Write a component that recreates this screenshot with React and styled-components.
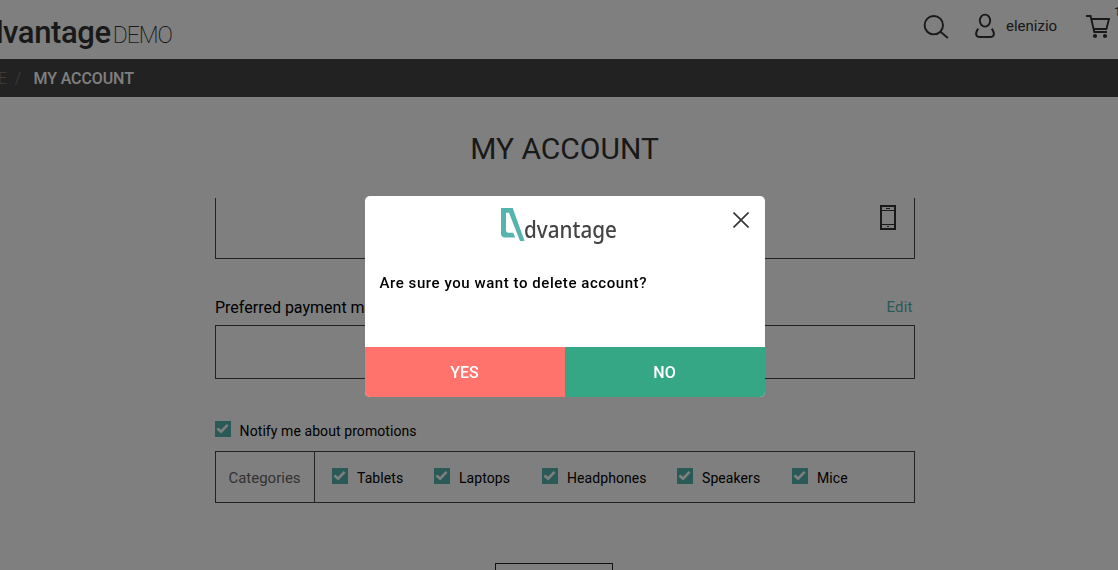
import React from "react";
import styled, { createGlobalStyle } from "styled-components";

const GlobalStyle = createGlobalStyle`
  * { box-sizing: border-box; }
  html, body { margin: 0; height: 570px; overflow: hidden; background: #fff; }
  body { font-family: Roboto, "Liberation Sans", sans-serif; color: #000; }
`;

const Page = styled.div`
  width: 1118px;
  height: 570px;
  overflow: hidden;
  background: #fff;
`;

const Header = styled.header`
  display: flex;
  justify-content: space-between;
  height: 59px;
`;

const Brand = styled.div`
  display: flex;
  align-items: baseline;
  justify-content: flex-end;
  width: 172px;
  padding-top: 14px;
  line-height: 38px;
  white-space: nowrap;
  color: #333;
`;

const BrandName = styled.span`
  font-size: 31px;
  font-weight: 500;
  letter-spacing: -0.4px;
`;

const BrandSuffix = styled.span`
  margin-left: 2px;
  font-size: 23px;
  font-weight: 200;
  letter-spacing: -1px;
`;

const Tools = styled.nav`
  display: flex;
  width: 195px;
  color: #333;
  svg { flex: none; display: block; }
`;

const UserName = styled.span`
  flex: none;
  width: 83px;
  padding-left: 9px;
  font-size: 15px;
  line-height: 52px;
`;

const CartCount = styled.span`
  font-size: 13px;
  line-height: 23px;
`;

const Breadcrumb = styled.div`
  display: flex;
  height: 38px;
  line-height: 39px;
  font-size: 16px;
  white-space: pre;
  background: #444;
  color: #fff;
`;

const Crumb = styled.span`
  display: flex;
  justify-content: flex-end;
  width: ${(p) => p.$width}px;
  color: #808080;
  font-weight: 300;
`;

const CurrentCrumb = styled.span`
  margin-left: 12.5px;
  font-weight: 500;
  letter-spacing: -0.1px;
`;

const Title = styled.h1`
  margin: 0;
  height: 101px;
  padding: 33px 0 0 11px;
  font-size: 30px;
  font-weight: 400;
  line-height: 37px;
  text-align: center;
  color: #333;
`;

const Content = styled.main`
  width: 700px;
  margin-left: 215px;
`;

const Panel = styled.section`
  height: ${(p) => p.$height}px;
  border: 1px solid #444;
  border-top-width: ${(p) => (p.$open ? 0 : 1)}px;
`;

const PhoneSlot = styled.div`
  display: flex;
  justify-content: flex-end;
  padding: 7px 18px 0 0;
`;

const SectionHead = styled.div`
  display: flex;
  justify-content: space-between;
  height: 66px;
  padding: 38px 2.6px 0 0;
  font-size: 16px;
  line-height: 22px;
`;

const EditLink = styled.a`
  font-size: 15px;
  line-height: 20px;
  letter-spacing: 0.1px;
  color: #55b4ae;
`;

const Option = styled.label`
  display: flex;
  align-items: flex-start;
  width: ${(p) => p.$width}px;
  font-size: 14px;
  line-height: 20px;
  letter-spacing: 0.08px;
  white-space: nowrap;
`;

const Tick = styled.span`
  flex: none;
  width: 16px;
  height: 16px;
  margin-right: ${(p) => p.$gap}px;
  background: #55b4ae;
  svg { display: block; }
`;

const Notify = styled.div`
  height: 72px;
  padding-top: 42px;
`;

const Categories = styled.section`
  display: flex;
  height: 52px;
  border: 1px solid #444;
`;

const CategoriesLabel = styled.div`
  width: 99px;
  padding-right: 1px;
  border-right: 1px solid #444;
  font-size: 15px;
  line-height: 52px;
  text-align: center;
  color: #666;
`;

const OptionRow = styled.div`
  display: flex;
  padding: 16px 0 0 17px;
`;

const PageButton = styled.button`
  display: block;
  width: 118px;
  height: 50px;
  margin: 60px 0 0 280px;
  border: 1px solid #222;
  background: #fff;
`;

const Overlay = styled.div`
  position: fixed;
  inset: 0;
  display: flex;
  align-items: flex-start;
  justify-content: center;
  padding: 196px 0 0 12px;
  background: rgba(0, 0, 0, 0.5);
`;

const Dialog = styled.div`
  width: 400px;
  height: 201px;
  border-radius: 5px;
  overflow: hidden;
  background: #fff;
`;

const DialogHead = styled.div`
  display: flex;
  height: 75px;
  padding: 12px 16px 0 136px;
`;

const LogoText = styled.span`
  flex: none;
  width: 100px;
  margin-left: -1px;
  font-family: "Noto Sans", sans-serif;
  font-size: 23.5px;
  font-weight: 500;
  line-height: 42px;
  color: #444;
  transform: scaleX(0.88);
  transform-origin: 0 0;
`;

const CloseButton = styled.button`
  width: 16px;
  height: 16px;
  margin: 4px 0 0 auto;
  padding: 0;
  border: 0;
  background: none;
  svg { display: block; }
`;

const Message = styled.p`
  margin: 0;
  height: 76px;
  padding-left: 14.5px;
  font-size: 15px;
  font-weight: 500;
  line-height: 24px;
  letter-spacing: 0.56px;
`;

const Actions = styled.div`
  display: flex;
`;

const ActionButton = styled.button`
  width: 200px;
  height: 50px;
  padding: 0 1px 0 0;
  border: 0;
  font-family: inherit;
  font-size: 16px;
  font-weight: 500;
  color: #fff;
  background: ${(p) => p.$color};
`;

function Checkbox({ label, width, gap = 9 }) {
  return (
    <Option $width={width}>
      <Tick $gap={gap}>
        <svg width="16" height="16" viewBox="0 0 16 16" fill="none" stroke="#fff" strokeWidth="2.6">
          <path d="M2.4 7.4 6.1 10.6 12.6 3.8" />
        </svg>
      </Tick>
      {label}
    </Option>
  );
}

const categories = [
  ["Tablets", 102],
  ["Laptops", 108],
  ["Headphones", 135],
  ["Speakers", 115],
  ["Mice", 80],
];

export default function App() {
  return (
    <>
      <GlobalStyle />
      <Page>
        <Header>
          <Brand>
            <BrandName>dvantage</BrandName>
            <BrandSuffix>DEMO</BrandSuffix>
          </Brand>
          <Tools>
            <svg width="74" height="59" viewBox="0 0 74 59" fill="none" stroke="currentColor" strokeWidth="1.9">
              <circle cx="10.8" cy="25.2" r="9.2" />
              <path d="m17.4 31.8 7.5 6.2" />
              <ellipse cx="62" cy="20.6" rx="5.2" ry="6" />
              <path d="M55.2 28.6c-3.6 5.2-2.4 8.4 1.8 8.4h10c4.2 0 5.4-3.2 1.8-8.4" />
            </svg>
            <UserName>elenizio</UserName>
            <svg width="34" height="59" viewBox="1077 0 34 59" fill="none" stroke="currentColor" strokeWidth="1.9">
              <path d="M1083 16h4.6l3.7 16H1104M1088.5 19h17.5l-2.6 10h-13" />
              <circle cx="1092" cy="36" r="2.1" fill="currentColor" stroke="none" />
              <circle cx="1102" cy="36" r="2.1" fill="currentColor" stroke="none" />
            </svg>
            <CartCount>1</CartCount>
          </Tools>
        </Header>
        <Breadcrumb>
          <Crumb $width={7}>HOME</Crumb>
          <Crumb $width={14}>/</Crumb>
          <CurrentCrumb>MY ACCOUNT</CurrentCrumb>
        </Breadcrumb>
        <Title>MY ACCOUNT</Title>
        <Content>
          <Panel $height={61} $open>
            <PhoneSlot>
              <svg width="16" height="25" viewBox="0 0 16 25" fill="none" stroke="#333">
                <path d="M1 1h14v23H1Z" strokeWidth="2" />
                <path d="M2 5.5h12M2 19.5h12M6 3.5h4M7 21.5h2" />
              </svg>
            </PhoneSlot>
          </Panel>
          <SectionHead>
            <span>Preferred payment method</span>
            <EditLink>Edit</EditLink>
          </SectionHead>
          <Panel $height={54} />
          <Notify>
            <Checkbox label="Notify me about promotions" width={300} gap={8.6} />
          </Notify>
          <Categories>
            <CategoriesLabel>Categories</CategoriesLabel>
            <OptionRow>
              {categories.map(([label, width]) => (
                <Checkbox key={label} label={label} width={width} />
              ))}
            </OptionRow>
          </Categories>
          <PageButton />
        </Content>
      </Page>
      <Overlay>
        <Dialog role="dialog">
          <DialogHead>
            <svg width="24" height="34" viewBox="0 0 24 34" fill="#55b4ae">
              <path d="M0 0H11.7L23.6 33H19L8 4.7H5V22.6Q5 24.7 7 24.7H12.2L14.2 29.5H4Q0 29.5 0 25.5Z" />
            </svg>
            <LogoText>dvantage</LogoText>
            <CloseButton aria-label="Close">
              <svg width="16" height="16" viewBox="0 0 16 16" stroke="#333" strokeWidth="1.6">
                <path d="m.5.5 15 15m0-15-15 15" />
              </svg>
            </CloseButton>
          </DialogHead>
          <Message>Are sure you want to delete account?</Message>
          <Actions>
            <ActionButton $color="#ff736c">YES</ActionButton>
            <ActionButton $color="#35a785">NO</ActionButton>
          </Actions>
        </Dialog>
      </Overlay>
    </>
  );
}
